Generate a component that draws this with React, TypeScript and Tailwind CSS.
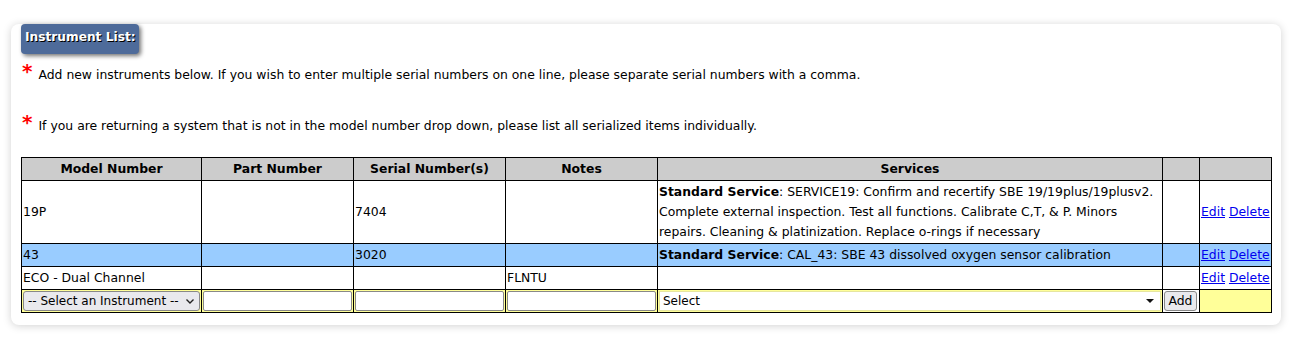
import React from "react";

const font = { fontFamily: '"DejaVu Sans", Verdana, sans-serif' };

const rows = [
  {
    model: "19P",
    part: "",
    serial: "7404",
    notes: "",
    service: "SERVICE19: Confirm and recertify SBE 19/19plus/19plusv2. Complete external inspection. Test all functions. Calibrate C,T, & P. Minors repairs. Cleaning & platinization. Replace o-rings if necessary",
    label: "Standard Service",
    bg: "bg-white",
    h: "h-[63px]",
  },
  {
    model: "43",
    part: "",
    serial: "3020",
    notes: "",
    service: "CAL_43: SBE 43 dissolved oxygen sensor calibration",
    label: "Standard Service",
    bg: "bg-[#99ccff]",
    h: "h-[23px]",
  },
  {
    model: "ECO - Dual Channel",
    part: "",
    serial: "",
    notes: "FLNTU",
    service: "",
    label: "",
    bg: "bg-white",
    h: "h-[23px]",
  },
];

const Note = ({ children }: { children: React.ReactNode }) => (
  <div className="flex items-start gap-[6px] text-[12.4px] text-black">
    <span className="text-[20px] leading-[20px] text-[#ff0000] font-bold">*</span>
    <span className="pt-[5px]">{children}</span>
  </div>
);

export default function App() {
  return (
    <div className="min-h-screen bg-white pt-[13px] pl-[11px] pr-[24px]" style={font}>
      <div className="relative">
        <div className="absolute left-[10px] top-0 z-10 flex h-[30px] w-[118px] items-start whitespace-nowrap rounded-[4px] bg-[#4e6b9a] px-[4px] pt-[4px] shadow-[2px_2px_4px_rgba(0,0,0,0.55)]">
          <span
            className="text-[12.2px] font-bold text-white"
            style={{ textShadow: "1px 1px 0 #000" }}
          >
            Instrument List:
          </span>
        </div>
        <div className="mt-[11px] rounded-[8px] bg-white shadow-[0_1px_8px_rgba(0,0,0,0.18)] px-[10px] pt-[37px] pb-[12px]">
          <div className="flex flex-col gap-[27px] pl-[1px]">
            <Note>
              Add new instruments below. If you wish to enter multiple serial numbers on one line, please separate serial numbers with a comma.
            </Note>
            <Note>
              If you are returning a system that is not in the model number drop down, please list all serialized items individually.
            </Note>
          </div>
          <table className="mt-[22px] w-[1250px] border-collapse text-[12.4px] text-black table-fixed">
            <colgroup>
              <col className="w-[180px]" />
              <col className="w-[152px]" />
              <col className="w-[152px]" />
              <col className="w-[152px]" />
              <col className="w-[505px]" />
              <col className="w-[37px]" />
              <col className="w-[72px]" />
            </colgroup>
            <thead>
              <tr className="h-[23px] bg-[#cccccc]">
                {["Model Number", "Part Number", "Serial Number(s)", "Notes", "Services", "", ""].map((t, i) => (
                  <th key={i} className="border border-black font-bold text-center p-0">
                    {t}
                  </th>
                ))}
              </tr>
            </thead>
            <tbody>
              {rows.map((r, i) => (
                <tr key={i} className={`${r.bg} ${r.h}`}>
                  <td className="border border-black px-[1px] align-middle">{r.model}</td>
                  <td className="border border-black px-[1px] align-middle">{r.part}</td>
                  <td className="border border-black px-[1px] align-middle">{r.serial}</td>
                  <td className="border border-black px-[1px] align-middle">{r.notes}</td>
                  <td className="border border-black px-[1px] align-middle leading-[20px]">
                    {r.label && <b>{r.label}</b>}
                    {r.label && ": "}
                    {r.service}
                  </td>
                  <td className="border border-black"></td>
                  <td className="border border-black px-[1px] align-middle whitespace-nowrap">
                    <a href="#" className="text-[#0000ee] underline">Edit</a>{" "}
                    <a href="#" className="text-[#0000ee] underline">Delete</a>
                  </td>
                </tr>
              ))}
              <tr className="h-[23px] bg-[#ffff99]">
                <td className="border border-black p-[1px]">
                  <div className="flex h-[20px] items-center justify-between rounded-[3px] border border-[#888] bg-[#e9e9ed] px-[4px] text-[12px]">
                    <span>-- Select an Instrument --</span>
                    <svg width="10" height="10" viewBox="0 0 10 10">
                      <path d="M1.5 3.5 L5 7 L8.5 3.5" stroke="#222" strokeWidth="1.4" fill="none" />
                    </svg>
                  </div>
                </td>
                {[0, 1, 2].map((k) => (
                  <td key={k} className="border border-black p-[1px]">
                    <div className="h-[20px] rounded-[2px] border border-[#888] bg-white"></div>
                  </td>
                ))}
                <td className="border border-black p-[1px]">
                  <div className="flex h-[20px] items-center justify-between border border-[#e6e6a0] bg-white px-[3px] text-[12px]">
                    <span>Select</span>
                    <svg width="10" height="6" viewBox="0 0 10 6" className="mr-[2px]">
                      <path d="M1 1 L9 1 L5 5 Z" fill="#111" />
                    </svg>
                  </div>
                </td>
                <td className="border border-black bg-white p-[1px]">
                  <div className="flex h-[20px] w-[33px] items-center justify-center rounded-[3px] border border-[#888] bg-[#e9e9ed]">
                    Add
                  </div>
                </td>
                <td className="border border-black"></td>
              </tr>
            </tbody>
          </table>
        </div>
      </div>
    </div>
  );
}
